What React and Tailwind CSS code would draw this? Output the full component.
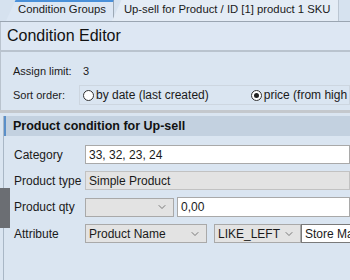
import { ChevronDown } from 'lucide-react';

function Tab({ active, children }) {
  return (
    <div
      className={`relative flex items-end h-[22px] pl-[12px] pr-[7px] pb-[3px] border-t border-r border-[#9aa5b1] ${
        active ? 'bg-[#dce7f4] border-t-[3px] border-t-[#4a90d9]' : 'bg-[#e4ecf5]'
      }`}
      style={{ clipPath: 'polygon(10px 0, 100% 0, 100% 100%, 0 100%)' }}
    >
      <span className="whitespace-nowrap">{children}</span>
    </div>
  );
}

function Select({ value, className }) {
  return (
    <div className={`flex items-center shrink-0 h-[19px] border border-[#a9a9a9] bg-[#e3e3e3] pl-[3px] pr-[5px] ${className}`}>
      <span className="flex-1 whitespace-nowrap overflow-hidden">{value}</span>
      <ChevronDown className="h-3 w-3 text-[#555] shrink-0" strokeWidth={1.5} />
    </div>
  );
}

function Row({ label, children }) {
  return (
    <div className="flex items-center">
      <span className="w-[71px] shrink-0 whitespace-nowrap">{label}</span>
      {children}
    </div>
  );
}

export default function App() {
  return (
    <div className="relative w-[350px] h-[280px] overflow-hidden bg-[#dae5f1] text-[11.5px] text-[#1a1a1a]" style={{ fontFamily: '"Liberation Sans", Arial, sans-serif' }}>
      {/* Tabs */}
      <div className="flex items-end h-[22px] bg-[#d6e2ef] border-b border-[#9aa5b1] pl-[6px] text-[11.3px]">
        <Tab active>Condition Groups</Tab>
        <div className="-ml-[2px]">
          <Tab>Up-sell for Product / ID [1] product 1 SKU</Tab>
        </div>
      </div>

      {/* Header */}
      <div className="h-[30px] flex items-center px-[6px] bg-[#dde7f3] border-b-2 border-[#b9c3ce] border-l border-l-[#b9c3ce]">
        <span className="text-[16px] text-[#111] leading-none">Condition Editor</span>
      </div>

      {/* Settings */}
      <div className="pl-[12px] pt-[10px] pb-[5px] border-l border-[#b9c3ce] text-[11px]">
        <div className="flex items-center h-[18px]">
          <span className="w-[70px] shrink-0 whitespace-nowrap">Assign limit:</span>
          <span>3</span>
        </div>
        <div className="flex items-center h-[20px] mt-[5px]">
          <span className="w-[66px] shrink-0 whitespace-nowrap">Sort order:</span>
          <div className="flex items-center flex-1 min-w-0 h-[20px] border border-[#cdd6e0] pl-[3px] text-[12px] overflow-hidden">
            <span className="w-[11px] h-[11px] rounded-full border border-[#333] bg-white mr-[2px] shrink-0" />
            <span className="whitespace-nowrap">by date (last created)</span>
            <span className="ml-[42px] w-[11px] h-[11px] rounded-full border border-[#333] bg-white mr-[2px] flex items-center justify-center shrink-0">
              <span className="w-[5px] h-[5px] rounded-full bg-[#222]" />
            </span>
            <span className="whitespace-nowrap">price (from high to low)</span>
          </div>
        </div>
      </div>

      <div className="h-[3px] bg-[#c4c8cd]" />

      {/* Product condition */}
      <div className="ml-[3px] mt-[3px] border-l border-[#a9b7c6] h-full text-[12px]">
        <div className="h-[20px] flex items-center pl-[7px] bg-[#c3d1e0] border-l-2 border-[#5a8fc9] font-bold text-[12.5px] text-[#111] whitespace-nowrap">
          Product condition for Up-sell
        </div>
        <div className="pl-[10px] pt-[9px] flex flex-col gap-[7px]">
          <Row label="Category">
            <div className="flex-1 h-[19px] border border-[#a9a9a9] bg-white flex items-center pl-[3px]">33, 32, 23, 24</div>
          </Row>
          <Row label="Product type">
            <div className="flex-1 h-[19px] border border-[#c2c2c2] bg-[#e3e3e3] flex items-center pl-[3px]">Simple Product</div>
          </Row>
          <Row label="Product qty">
            <Select value="" className="w-[89px]" />
            <div className="flex-1 ml-[3px] h-[20px] border border-[#a9a9a9] bg-white flex items-center pl-[3px]">0,00</div>
          </Row>
          <Row label="Attribute">
            <Select value="Product Name" className="w-[122px]" />
            <Select value="LIKE_LEFT" className="w-[87px] ml-[7px]" />
            <div className="w-[60px] shrink-0 h-[19px] border border-[#7a7a7a] bg-white flex items-center pl-[3px] whitespace-nowrap overflow-hidden">Store Manager</div>
          </Row>
        </div>
      </div>

      <div className="absolute left-0 top-[188px] w-[10px] h-[40px] bg-[#6b6e73]" />
    </div>
  );
}
